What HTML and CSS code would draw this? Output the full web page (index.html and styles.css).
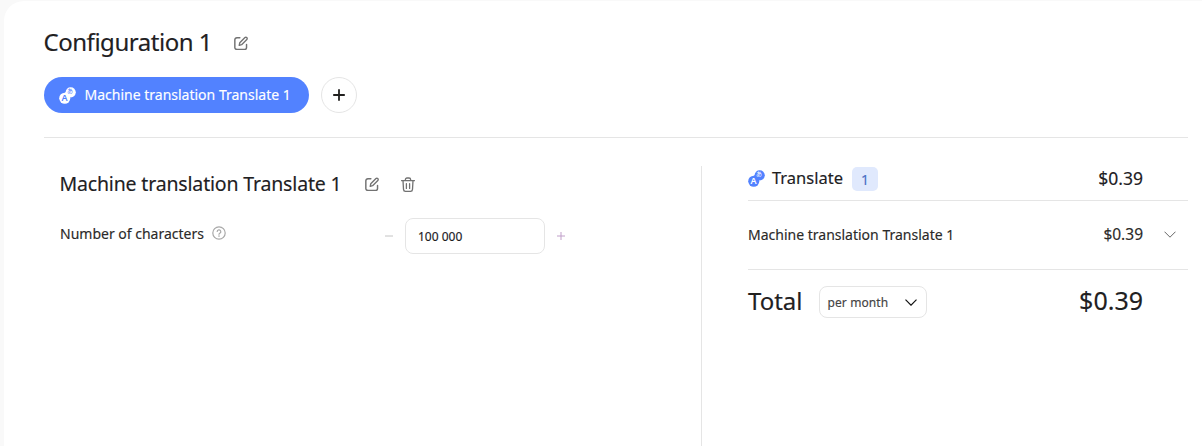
FILE: index.html
```html
<!DOCTYPE html>
<html lang="en">
<head>
<meta charset="utf-8">
<title>Configuration 1</title>
<link rel="stylesheet" href="styles.css">
</head>
<body>
<svg class="defs" width="0" height="0" aria-hidden="true">
  <symbol id="pen" viewBox="1.4 .9 13.4 13.4">
    <path d="M7 2.6H4.2A2 2 0 0 0 2.2 4.6v7.2a2 2 0 0 0 2 2h7.2a2 2 0 0 0 2-2V9" fill="none" stroke="currentColor" stroke-width="1.4" stroke-linecap="round"/>
    <path d="M6.4 9.8l.5-2.4 5-5a1.2 1.2 0 0 1 1.7 0l.1.1a1.2 1.2 0 0 1 0 1.7l-5 5z" fill="none" stroke="currentColor" stroke-width="1.3" stroke-linejoin="round"/>
  </symbol>
  <symbol id="badge" viewBox="0 0 16 16">
    <circle cx="5.4" cy="10.6" r="5.2" fill="currentColor"/>
    <circle cx="11" cy="5" r="4.8" fill="currentColor"/>
    <path d="M4.6 6.6 7.9 9.9 11.4 6 8.2 2.9z" fill="currentColor"/>
  </symbol>
</svg>
<main class="card">
  <header class="top">
    <div class="title-row">
      <h1 class="title">Configuration 1</h1>
      <svg class="icon-edit title-edit"><use href="#pen"/></svg>
    </div>
    <div class="tabs">
      <div class="tab">
        <span class="service-icon on-blue">
          <svg class="badge-svg"><use href="#badge"/></svg>
          <i class="ltr ltr-a">A</i><i class="ltr ltr-b">あ</i>
        </span>
        <span class="tab-label">Machine translation Translate 1</span>
      </div>
      <button class="add" type="button" aria-label="Add">
        <svg width="14" height="14" viewBox="0 0 14 14"><path d="M7 1.2v11.6M1.2 7h11.6" stroke="currentColor" stroke-width="1.8"/></svg>
      </button>
    </div>
  </header>
  <div class="columns">
    <section class="editor">
      <div class="editor-head">
        <h2 class="editor-title">Machine translation Translate 1</h2>
        <svg class="icon-edit"><use href="#pen"/></svg>
        <svg class="icon-trash" viewBox="1 .4 14 14.6">
          <path d="M5.4 3.4V2.8a1.6 1.6 0 0 1 1.6-1.6h2a1.6 1.6 0 0 1 1.6 1.6v.6M1.6 3.8h12.8M3 3.8l.5 8.8a2 2 0 0 0 2 1.9h5a2 2 0 0 0 2-1.9l.5-8.8M6.4 6.8v4.8M9.6 6.8v4.8" fill="none" stroke="currentColor" stroke-width="1.3" stroke-linecap="round"/>
        </svg>
      </div>
      <div class="field">
        <div class="field-label">
          <span>Number of characters</span>
          <svg class="help" viewBox="0 0 14 14">
            <circle cx="7" cy="7" r="6.2" fill="none" stroke="currentColor" stroke-width="1.2"/>
            <path d="M5.2 5.5A1.8 1.8 0 1 1 7.8 7.2c-.5.3-.8.6-.8 1.1" fill="none" stroke="currentColor" stroke-width="1.2" stroke-linecap="round"/>
            <circle cx="7" cy="10.1" r=".8" fill="currentColor"/>
          </svg>
        </div>
        <div class="stepper">
          <svg class="step" viewBox="0 0 8 8"><path d="M0 4h8" stroke="#c4c4c4" stroke-width="1"/></svg>
          <div class="num">100 000</div>
          <svg class="step" viewBox="0 0 8 8"><path d="M0 4h8M4 0v8" stroke="#c09fc9" stroke-width="1"/></svg>
        </div>
      </div>
    </section>
    <aside class="summary">
      <div class="sum-head">
        <span class="service-icon blue">
          <svg class="badge-svg"><use href="#badge"/></svg>
          <i class="ltr ltr-a">A</i><i class="ltr ltr-b">あ</i>
        </span>
        <span class="sum-name">Translate</span>
        <span class="count">1</span>
        <span class="sum-price">$0.39</span>
      </div>
      <div class="sum-row">
        <span>Machine translation Translate 1</span>
        <span class="row-price">$0.39</span>
        <svg class="chev-light" viewBox="0 0 12 7"><path d="M.5 .7l5.500 5.500 5.500-5.500" fill="none" stroke="#666" stroke-width="1"/></svg>
      </div>
      <div class="sum-total">
        <span class="total-label">Total</span>
        <div class="period">
          <span class="period-label">per month</span>
          <svg class="chev-dark" viewBox="0 0 12 7"><path d="M.5 .7l5.500 5.500 5.500-5.500" fill="none" stroke="#111" stroke-width="1.2"/></svg>
        </div>
        <span class="total-price">$0.39</span>
      </div>
    </aside>
  </div>
</main>
</body>
</html>
```

FILE: styles.css
```css
* { box-sizing: border-box; }
html, body { margin: 0; height: 100%; overflow: hidden; }
body {
  background: #f9f9f9;
  font-family: "Noto Sans", "Open Sans", sans-serif;
  color: #21201f;
  padding: 1px 0 0 4px;
  -webkit-text-stroke: .15px currentColor;
}
.defs { position: absolute; }
.card {
  background: #fff;
  height: 445px;
  overflow: hidden;
  border-radius: 20px 0 0 0;
  padding: 24px 14px 0 40px;
}
.title-row { display: flex; align-items: center; height: 36px; }
.title { font-size: 24px; font-weight: 400; margin: 0 0 0 -.5px; padding-bottom: 2px; line-height: 36px; letter-spacing: -.47px; }
.icon-edit { width: 14px; height: 14px; color: #727272; display: block; flex: none; }
.title-edit { margin-left: 22px; }
.tabs { display: flex; align-items: center; gap: 12px; margin-top: 16px; }
.tab {
  display: flex; align-items: center; gap: 9px;
  height: 36px; width: 265px; padding-left: 15px;
  background: #5282ff; color: #fff; border-radius: 18px; font-size: 14px;
}
.tab-label { padding-bottom: 2px; margin-left: -.5px; }
.add {
  width: 36px; height: 36px; border-radius: 50%; padding: 0;
  background: #fff; border: 1px solid #e5e5e5; color: #21201f;
  display: flex; align-items: center; justify-content: center;
}
.service-icon { position: relative; display: block; width: 17px; height: 17px; flex: none; -webkit-text-stroke: 0; }
.on-blue { color: #fff; }
.blue { color: #5282ff; top: -1px; }
.badge-svg { width: 17px; height: 17px; display: block; }
.ltr { position: absolute; font-style: normal; line-height: 1; font-family: "Noto Sans", sans-serif; }
.ltr-a { left: 2.5px; top: 6.5px; font-size: 9px; font-weight: 600; }
.ltr-b { left: 8px; top: 1.5px; font-size: 6px; font-family: "Noto Sans CJK JP", sans-serif; }
.on-blue .ltr { color: #5282ff; }
.blue .ltr { color: #fff; }
.columns {
  display: flex;
  margin-top: 24px;
  border-top: 1px solid #e5e5e5;
  padding-top: 28px;
}
.editor {
  width: 658px; height: 300px; flex: none;
  border-right: 1px solid #e5e5e5;
  padding: 0 0 0 16px;
}
.editor-head { display: flex; align-items: center; height: 36px; }
.editor-title { font-size: 19.5px; font-weight: 400; margin: 0 0 0 -.5px; padding-bottom: 2px; letter-spacing: -.17px; }
.editor-head .icon-edit { margin-left: 23px; }
.icon-trash { width: 14px; height: 15px; color: #727272; margin-left: 22px; display: block; flex: none; }
.field { display: flex; margin-top: 16px; align-items: flex-start; }
.field-label { display: flex; align-items: center; gap: 8px; font-size: 14px; width: 325px; height: 24px; margin-top: 3px; color: #2b2a29; }
.help { width: 14px; height: 14px; color: #a8a8a8; }
.stepper { display: flex; align-items: center; gap: 12px; }
.step { width: 8px; height: 8px; display: block; }
.num {
  width: 140px; height: 36px; border: 1px solid #e5e5e5; border-radius: 8px;
  font-size: 12px; line-height: 35px; padding-left: 12px;
}
.summary { flex: 1; padding-left: 46px; }
.sum-head {
  display: flex; align-items: center; height: 35px;
  border-bottom: 1px solid #e5e5e5; font-size: 16.5px;
  padding-bottom: 8px; padding-right: 45px;
}
.sum-name { margin-left: 7px; padding-bottom: 3px; }
.count {
  margin-left: 9px; width: 26px; height: 24px; border-radius: 5px;
  background: #e0e9fd; color: #4a6fc4; font-size: 14px;
  display: flex; align-items: center; justify-content: center;
}
.sum-price { margin-left: auto; font-size: 17.5px; padding-bottom: 3px; }
.sum-row {
  display: flex; align-items: center; height: 69px; font-size: 14px; color: #2b2a29;
  border-bottom: 1px solid #e5e5e5; padding: 0 12px 2px 0;
}
.row-price { margin-left: auto; font-size: 15.5px; }
.chev-light { width: 12px; height: 7px; margin-left: 21px; }
.sum-total { display: flex; align-items: center; height: 64px; padding-right: 45px; }
.total-label { font-size: 24px; padding-bottom: 4px; }
.period {
  display: flex; align-items: center; justify-content: space-between;
  width: 108px; height: 32px; margin-left: 16px; padding: 0 9px 0 8px;
  border: 1px solid #e5e5e5; border-radius: 8px; font-size: 12px; color: #444;
}
.period-label { letter-spacing: .1px; }
.chev-dark { width: 12px; height: 7px; }
.total-price { margin-left: auto; font-size: 25px; padding-bottom: 5px; }
```
